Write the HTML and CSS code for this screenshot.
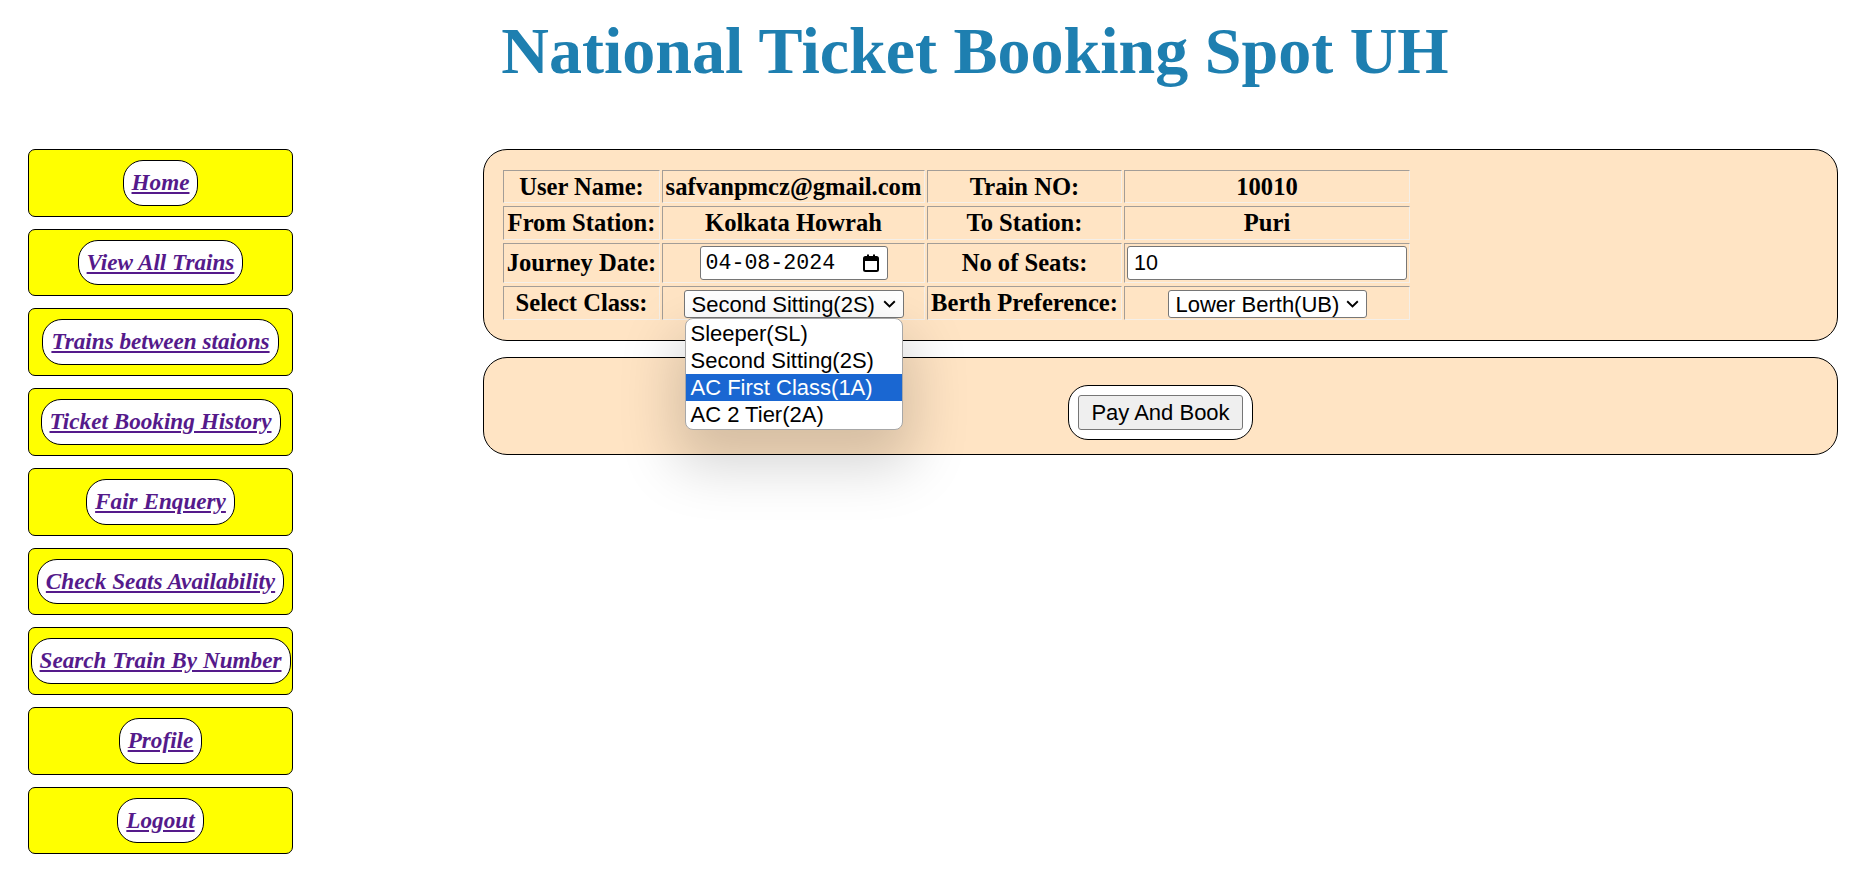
FILE: index.html
```html
<!DOCTYPE html>
<html lang="en">
<head>
<meta charset="utf-8">
<title>National Ticket Booking Spot UH</title>
<link rel="stylesheet" href="styles.css">
</head>
<body>
<header class="site-header">
  <h1 class="title">National Ticket Booking Spot UH</h1>
</header>
<div class="layout">
  <nav class="sidebar">
    <div class="nav-item"><a class="nav-link" href="#">Home</a></div>
    <div class="nav-item"><a class="nav-link" href="#">View All Trains</a></div>
    <div class="nav-item"><a class="nav-link" href="#">Trains between staions</a></div>
    <div class="nav-item"><a class="nav-link" href="#">Ticket Booking History</a></div>
    <div class="nav-item"><a class="nav-link" href="#">Fair Enquery</a></div>
    <div class="nav-item"><a class="nav-link" href="#">Check Seats Availability</a></div>
    <div class="nav-item"><a class="nav-link" href="#">Search Train By Number</a></div>
    <div class="nav-item"><a class="nav-link" href="#">Profile</a></div>
    <div class="nav-item"><a class="nav-link" href="#">Logout</a></div>
  </nav>
  <main class="content">
    <section class="panel details">
      <table class="booking-table">
        <tr class="row-a">
          <th class="c1">User Name:</th>
          <th class="c2">safvanpmcz@gmail.com</th>
          <th class="c3">Train NO:</th>
          <th class="c4">10010</th>
        </tr>
        <tr class="row-b">
          <th class="c1">From Station:</th>
          <th class="c2">Kolkata Howrah</th>
          <th class="c3">To Station:</th>
          <th class="c4">Puri</th>
        </tr>
        <tr class="row-c">
          <th class="c1">Journey Date:</th>
          <th class="c2">
            <span class="date-field">
              <span class="date-text">04-08-2024</span>
              <svg class="cal-icon" width="16" height="18" viewBox="0 0 16 18" aria-hidden="true">
                <rect x="1" y="3" width="14" height="14" rx="1.5" fill="none" stroke="#000" stroke-width="2"/>
                <rect x="1" y="3" width="14" height="4" fill="#000"/>
                <rect x="4" y="0.5" width="2" height="3" fill="#000"/>
                <rect x="10" y="0.5" width="2" height="3" fill="#000"/>
              </svg>
            </span>
          </th>
          <th class="c3">No of Seats:</th>
          <th class="c4"><input class="num-input" type="number" value="10"></th>
        </tr>
        <tr class="row-d">
          <th class="c1">Select Class:</th>
          <th class="c2">
            <span class="select-wrap">
              <select class="select class-select">
                <option>Sleeper(SL)</option>
                <option selected>Second Sitting(2S)</option>
                <option>AC First Class(1A)</option>
                <option>AC 2 Tier(2A)</option>
              </select>
              <svg class="chevron" width="13" height="8" viewBox="0 0 13 8" aria-hidden="true"><path d="M1.2 1.2 L6.5 6.4 L11.8 1.2" fill="none" stroke="#000" stroke-width="1.9"/></svg>
              <ul class="dropdown" role="listbox">
                <li class="dropdown-item">Sleeper(SL)</li>
                <li class="dropdown-item">Second Sitting(2S)</li>
                <li class="dropdown-item is-active">AC First Class(1A)</li>
                <li class="dropdown-item">AC 2 Tier(2A)</li>
              </ul>
            </span>
          </th>
          <th class="c3">Berth Preference:</th>
          <th class="c4">
            <span class="select-wrap">
              <select class="select berth-select">
                <option selected>Lower Berth(UB)</option>
                <option>Middle Berth(MB)</option>
                <option>Upper Berth(UB)</option>
              </select>
              <svg class="chevron" width="13" height="8" viewBox="0 0 13 8" aria-hidden="true"><path d="M1.2 1.2 L6.5 6.4 L11.8 1.2" fill="none" stroke="#000" stroke-width="1.9"/></svg>
            </span>
          </th>
        </tr>
      </table>
    </section>
    <section class="panel pay">
      <span class="pay-wrap"><button class="pay-btn" type="button">Pay And Book</button></span>
    </section>
  </main>
</div>
</body>
</html>
```

FILE: styles.css
```css
html, body {
  margin: 0;
  padding: 0;
  background: #ffffff;
}

body {
  font-family: "Liberation Serif", "Times New Roman", serif;
  color: #000;
}

.site-header {
  padding: 13px 0 0 96px;
  text-align: center;
}

.title {
  margin: 0;
  font-family: "Liberation Serif", "Times New Roman", serif;
  font-weight: bold;
  font-size: 66px;
  line-height: 76px;
  color: #1e7fb0;
}

.layout {
  display: grid;
  grid-template-columns: 265px 1fr;
  column-gap: 190px;
  align-items: start;
  margin-top: 60px;
  padding: 0 16px 0 28px;
}

.sidebar {
  display: flex;
  flex-direction: column;
  gap: 12px;
}

.nav-item {
  box-sizing: border-box;
  background: #ffff00;
  border: 1px solid #000;
  border-radius: 7px;
  padding: 10px 0;
  display: flex;
  justify-content: center;
}

.nav-link {
  display: inline-block;
  background: #fff;
  border: 1px solid #000;
  border-radius: 20px;
  padding: 9px 8px;
  font-family: "Liberation Serif", "Times New Roman", serif;
  font-size: 23.2px;
  font-weight: bold;
  font-style: italic;
  line-height: 25.7px;
  color: #551a8b;
  text-decoration: underline;
  white-space: nowrap;
}

.content {
  display: flex;
  flex-direction: column;
  gap: 16px;
}

.panel {
  background: #ffe4c4;
  border: 1px solid #000;
  border-radius: 24px;
}

.details {
  padding: 17px;
}

.booking-table {
  border-collapse: separate;
  border-spacing: 2px 3px;
}

.booking-table th {
  box-sizing: border-box;
  padding: 0;
  border: 1px solid;
  border-color: #a39d97 #f4efe9 #f4efe9 #a39d97;
  font-family: "Liberation Serif", "Times New Roman", serif;
  font-size: 24.6px;
  font-weight: bold;
  text-align: center;
  vertical-align: middle;
  white-space: nowrap;
}

.c1 { width: 157px; }
.c2 { width: 263px; }
.c3 { width: 195px; }
.c4 { width: 286px; }

.row-a th { height: 33px; }
.row-b th { height: 34px; }
.row-c th { height: 40px; }
.row-d th { height: 34px; }

.date-field {
  box-sizing: border-box;
  display: inline-flex;
  align-items: center;
  justify-content: space-between;
  width: 188px;
  height: 34px;
  padding: 0 8px 0 5px;
  background: #fff;
  border: 1px solid #767676;
  border-radius: 3px;
  vertical-align: middle;
}

.date-text {
  font-family: "Liberation Mono", "DejaVu Sans Mono", monospace;
  font-size: 21.6px;
  font-weight: normal;
  color: #000;
}

.cal-icon {
  display: block;
}

.num-input {
  box-sizing: border-box;
  width: 280px;
  height: 34px;
  margin: 0 0 0 2px;
  padding: 0 6px;
  background: #fff;
  border: 1px solid #767676;
  border-radius: 3px;
  font-family: "Liberation Sans", Arial, sans-serif;
  font-size: 21.5px;
  color: #000;
  display: block;
}

.select-wrap {
  position: relative;
  display: inline-block;
  vertical-align: middle;
}

.select {
  display: block;
  box-sizing: border-box;
  height: 28px;
  padding: 0 24px 0 7px;
  background: #fff;
  border: 1px solid #767676;
  border-radius: 3px;
  font-family: "Liberation Sans", Arial, sans-serif;
  font-size: 22px;
  color: #000;
  -webkit-appearance: none;
  appearance: none;
}

.class-select { width: 220px; }
.berth-select { width: 199px; }

.chevron {
  position: absolute;
  right: 8px;
  top: 10px;
  pointer-events: none;
}

.dropdown {
  position: absolute;
  top: 28px;
  left: 1px;
  z-index: 10;
  box-sizing: border-box;
  width: 218px;
  margin: 0;
  padding: 1px 0;
  list-style: none;
  background: #fff;
  border: 1px solid #a7a7a7;
  border-radius: 8px;
  box-shadow: 0 26px 56px 10px rgba(0, 0, 0, 0.17);
  overflow: hidden;
  text-align: left;
}

.dropdown-item {
  height: 27px;
  line-height: 27px;
  padding: 0 5px;
  font-family: "Liberation Sans", Arial, sans-serif;
  font-size: 22px;
  font-weight: normal;
  color: #000;
  white-space: nowrap;
}

.dropdown-item.is-active {
  background: #1a67d2;
  color: #fff;
}

.pay {
  display: flex;
  justify-content: center;
  padding: 27px 0 14px;
}

.pay-wrap {
  display: inline-flex;
  padding: 9px;
  background: #fff;
  border: 1px solid #000;
  border-radius: 20px;
}

.pay-btn {
  box-sizing: border-box;
  height: 35px;
  margin: 0;
  padding: 0 12px;
  background: #efefef;
  border: 1px solid #767676;
  border-radius: 3px;
  font-family: "Liberation Sans", Arial, sans-serif;
  font-size: 22px;
  color: #000;
}
```
